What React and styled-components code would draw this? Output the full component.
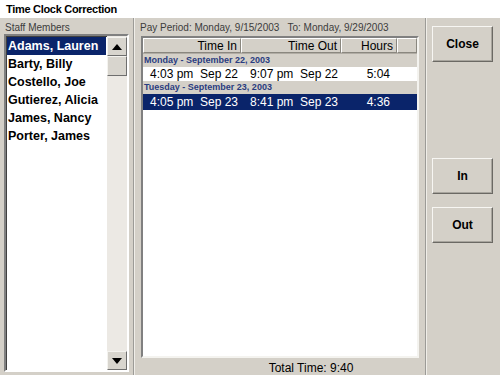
import styled, { createGlobalStyle } from "styled-components";

const GlobalStyle = createGlobalStyle`
  html, body {
    margin: 0;
    padding: 0;
    background: #d4d0c8;
  }
  * {
    box-sizing: border-box;
  }
`;

const Window = styled.div`
  width: 500px;
  height: 375px;
  display: flex;
  flex-direction: column;
  font-family: "Liberation Sans", Arial, sans-serif;
  background: #d4d0c8;
  overflow: hidden;
`;

const TitleBar = styled.div`
  height: 18px;
  background: #ffffff;
  padding: 3px 0 0 6px;
  font-size: 11px;
  font-weight: bold;
  letter-spacing: -0.3px;
  color: #000;
  line-height: 13px;
`;

const Body = styled.div`
  flex: 1;
  display: flex;
  min-height: 0;
`;

const LeftPanel = styled.div`
  width: 135px;
  display: flex;
  flex-direction: column;
  padding: 0 4px 3px 4px;
  border-right: 2px groove #f0eee9;
`;

const Label = styled.div`
  height: ${(p) => p.$h || 16}px;
  font-size: 10px;
  line-height: 14px;
  padding-top: 3px;
  padding-left: ${(p) => p.$indent || 1}px;
  color: #3c3c3c;
  white-space: nowrap;
`;

const ListBox = styled.div`
  flex: 1;
  display: flex;
  border: 2px solid;
  border-color: #808080 #ffffff #ffffff #808080;
  box-shadow: inset 1px 1px 0 #404040;
  background: #ffffff;
  min-height: 0;
`;

const NameList = styled.div`
  flex: 1;
  padding: 1px 1px 0 1px;
`;

const NameRow = styled.div`
  height: 18px;
  line-height: 18px;
  font-size: 12.5px;
  font-weight: bold;
  padding-left: 1px;
  color: ${(p) => (p.$selected ? "#ffffff" : "#000000")};
  background: ${(p) => (p.$selected ? "#0a246a" : "transparent")};
`;

const ScrollBar = styled.div`
  width: 20px;
  display: flex;
  flex-direction: column;
  background: #ece9e4;
  padding-top: 1px;
`;

const ScrollButton = styled.div`
  height: ${(p) => p.$h || 19}px;
  display: flex;
  align-items: center;
  justify-content: center;
  background: #d8d5ce;
  border: 1px solid;
  border-color: #f4f3ef #6e6e6e #6e6e6e #f4f3ef;
`;

const Spacer = styled.div`
  flex: 1;
`;

const Arrow = styled.div`
  width: 0;
  height: 0;
  border-left: 5px solid transparent;
  border-right: 5px solid transparent;
  ${(p) =>
    p.$up
      ? "border-bottom: 6px solid #000;"
      : "border-top: 6px solid #000;"}
`;

const MiddlePanel = styled.div`
  flex: 1;
  display: flex;
  flex-direction: column;
  padding: 0 4px 0 4px;
  border-right: 2px groove #f0eee9;
`;

const TableBox = styled.div`
  flex: 1;
  display: flex;
  flex-direction: column;
  margin: 0 2px 0 2px;
  border: 2px solid;
  border-color: #808080 #f4f3ef #f4f3ef #808080;
  background: #ffffff;
  min-height: 0;
`;

const HeaderRow = styled.div`
  display: flex;
  height: 16px;
  background: #d4d0c8;
  border-bottom: 1px solid #b0aca4;
`;

const HeaderCell = styled.div`
  width: ${(p) => p.$w}px;
  flex: ${(p) => (p.$grow ? 1 : "none")};
  text-align: right;
  padding-right: 3px;
  font-size: 12px;
  line-height: 14px;
  color: #000;
  border: 1px solid;
  border-color: #ffffff #8a877f #8a877f #ffffff;
`;

const GroupHeader = styled.div`
  height: 13px;
  background: #d4d0c8;
  color: #2a3c80;
  font-size: 9px;
  font-weight: bold;
  line-height: 13px;
  padding-left: 1px;
`;

const DataRow = styled.div`
  display: flex;
  height: ${(p) => (p.$selected ? 16 : 14)}px;
  align-items: center;
  font-size: 12px;
  padding-left: 7px;
  color: ${(p) => (p.$selected ? "#ffffff" : "#000000")};
  background: ${(p) => (p.$selected ? "#0a246a" : "#ffffff")};
`;

const Cell = styled.span`
  width: ${(p) => p.$w}px;
  flex: none;
  text-align: ${(p) => (p.$right ? "right" : "left")};
  white-space: nowrap;
`;

const TotalLine = styled.div`
  height: 17px;
  display: flex;
  align-items: center;
  justify-content: center;
  padding: 2px 0 0 62px;
  font-size: 12px;
  color: #000;
`;

const RightPanel = styled.div`
  width: 73px;
  display: flex;
  flex-direction: column;
  padding: 8px 5px 0 5px;
`;

const Button = styled.button`
  width: 61px;
  height: 36px;
  margin-top: ${(p) => p.$top || 0}px;
  background: #d4d0c8;
  border: 1px solid;
  border-color: #f7f6f3 #6b6964 #6b6964 #f7f6f3;
  box-shadow: inset -1px -1px 0 #a8a59e;
  font-family: "Liberation Sans", Arial, sans-serif;
  font-size: 12px;
  font-weight: bold;
  color: #000;
  padding: 0;
`;

const staff = [
  "Adams, Lauren",
  "Barty, Billy",
  "Costello, Joe",
  "Gutierez, Alicia",
  "James, Nancy",
  "Porter, James",
];

const days = [
  {
    label: "Monday - September 22, 2003",
    rows: [{ inT: "4:03 pm", inD: "Sep 22", outT: "9:07 pm", outD: "Sep 22", hrs: "5:04" }],
  },
  {
    label: "Tuesday - September 23, 2003",
    rows: [
      { inT: "4:05 pm", inD: "Sep 23", outT: "8:41 pm", outD: "Sep 23", hrs: "4:36", selected: true },
    ],
  },
];

export default function App() {
  return (
    <Window>
      <GlobalStyle />
      <TitleBar>Time Clock Correction</TitleBar>
      <Body>
        <LeftPanel>
          <Label>Staff Members</Label>
          <ListBox>
            <NameList>
              {staff.map((name, i) => (
                <NameRow key={name} $selected={i === 0}>
                  {name}
                </NameRow>
              ))}
            </NameList>
            <ScrollBar>
              <ScrollButton>
                <Arrow $up />
              </ScrollButton>
              <ScrollButton $h={20} />
              <Spacer />
              <ScrollButton>
                <Arrow />
              </ScrollButton>
            </ScrollBar>
          </ListBox>
        </LeftPanel>
        <MiddlePanel>
          <Label $h={18}>Pay Period: Monday, 9/15/2003&nbsp;&nbsp; To: Monday, 9/29/2003</Label>
          <TableBox>
            <HeaderRow>
              <HeaderCell $w={98}>Time In</HeaderCell>
              <HeaderCell $w={100}>Time Out</HeaderCell>
              <HeaderCell $w={56}>Hours</HeaderCell>
              <HeaderCell $grow />
            </HeaderRow>
            {days.map((day) => (
              <div key={day.label}>
                <GroupHeader>{day.label}</GroupHeader>
                {day.rows.map((r) => (
                  <DataRow key={r.inT} $selected={r.selected}>
                    <Cell $w={50}>{r.inT}</Cell>
                    <Cell $w={50}>{r.inD}</Cell>
                    <Cell $w={50}>{r.outT}</Cell>
                    <Cell $w={50}>{r.outD}</Cell>
                    <Cell $w={40} $right>
                      {r.hrs}
                    </Cell>
                  </DataRow>
                ))}
              </div>
            ))}
          </TableBox>
          <TotalLine>Total Time: 9:40</TotalLine>
        </MiddlePanel>
        <RightPanel>
          <Button>Close</Button>
          <Button $top={96}>In</Button>
          <Button $top={13}>Out</Button>
        </RightPanel>
      </Body>
    </Window>
  );
}
